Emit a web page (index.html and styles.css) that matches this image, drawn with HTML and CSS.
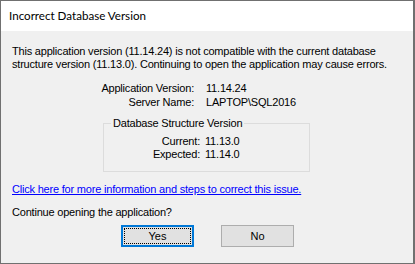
FILE: index.html
```html
<!DOCTYPE html>
<html lang="en">
<head>
  <meta charset="UTF-8">
  <title>Incorrect Database Version</title>
  <link rel="stylesheet" href="styles.css">
</head>
<body>

  <div class="window">
    <div class="titlebar">Incorrect Database Version</div>
    <div class="content">
      <p class="message">This application version (11.14.24) is not compatible with the current database structure version (11.13.0). Continuing to open the application may cause errors.</p>

      <div class="details">
        <span class="label">Application Version:</span><span>11.14.24</span>
        <span class="label">Server Name:</span><span>LAPTOP\SQL2016</span>
      </div>

      <fieldset class="group">
        <legend>Database Structure Version</legend>
        <div class="group-rows">
          <span class="label">Current:</span><span>11.13.0</span>
          <span class="label">Expected:</span><span>11.14.0</span>
        </div>
      </fieldset>

      <a class="link" href="#">Click here for more information and steps to correct this issue.</a>
      <p class="question">Continue opening the application?</p>

      <div class="buttons">
        <button class="btn btn-default"><span>Yes</span></button>
        <button class="btn">No</button>
      </div>
    </div>
  </div>

</body>
</html>
```

FILE: styles.css
```css
body {
  margin: 0;
  background: #f0f0f0;
}
.window {
  width: 415px;
  height: 264px;
  box-sizing: border-box;
  border: 1px solid #707070;
  border-right-width: 2px;
  background: #f0f0f0;
  font-family: "Liberation Sans", Arial, sans-serif;
  font-size: 11px;
  letter-spacing: -0.2px;
  color: #000;
}
.titlebar {
  height: 30px;
  background: #fff;
  font-family: Lato, sans-serif;
  font-size: 11.6px;
  letter-spacing: 0;
  line-height: 30px;
  padding-left: 8px;
  color: #000;
}
.content {
  padding: 14px 0 0 11px;
}
.message {
  margin: 0;
  width: 395px;
  line-height: 13px;
}
.details {
  display: grid;
  grid-template-columns: 182px auto;
  column-gap: 12px;
  margin-top: 10px;
  line-height: 14px;
}
.label {
  text-align: right;
}
.group {
  margin: 8px 0 0 91px;
  padding: 5px 0 10px 0;
  border: 1px solid #dcdcdc;
  box-sizing: border-box;
  width: 207px;
}
.group legend {
  padding: 0 2px;
  margin-left: 7px;
  line-height: 13px;
}
.group-rows {
  display: grid;
  grid-template-columns: 96px auto;
  column-gap: 5px;
  line-height: 13px;
}
.link {
  display: block;
  margin-top: 11px;
  color: #0000ff;
  line-height: 13px;
}
.question {
  margin: 10px 0 0 0;
  line-height: 13px;
}
.buttons {
  display: flex;
  gap: 27px;
  margin: 6px 0 0 109px;
}
.btn {
  width: 73px;
  height: 22px;
  box-sizing: border-box;
  border: 1px solid #adadad;
  background: #e1e1e1;
  font-family: "Liberation Sans", Arial, sans-serif;
  font-size: 11px;
  color: #000;
  padding: 0;
}
.btn-default {
  border: 2px solid #0078d7;
  padding: 1px;
}
.btn-default span {
  display: block;
  height: 100%;
  box-sizing: border-box;
  border: 1px dotted #000;
  line-height: 14px;
}
```
